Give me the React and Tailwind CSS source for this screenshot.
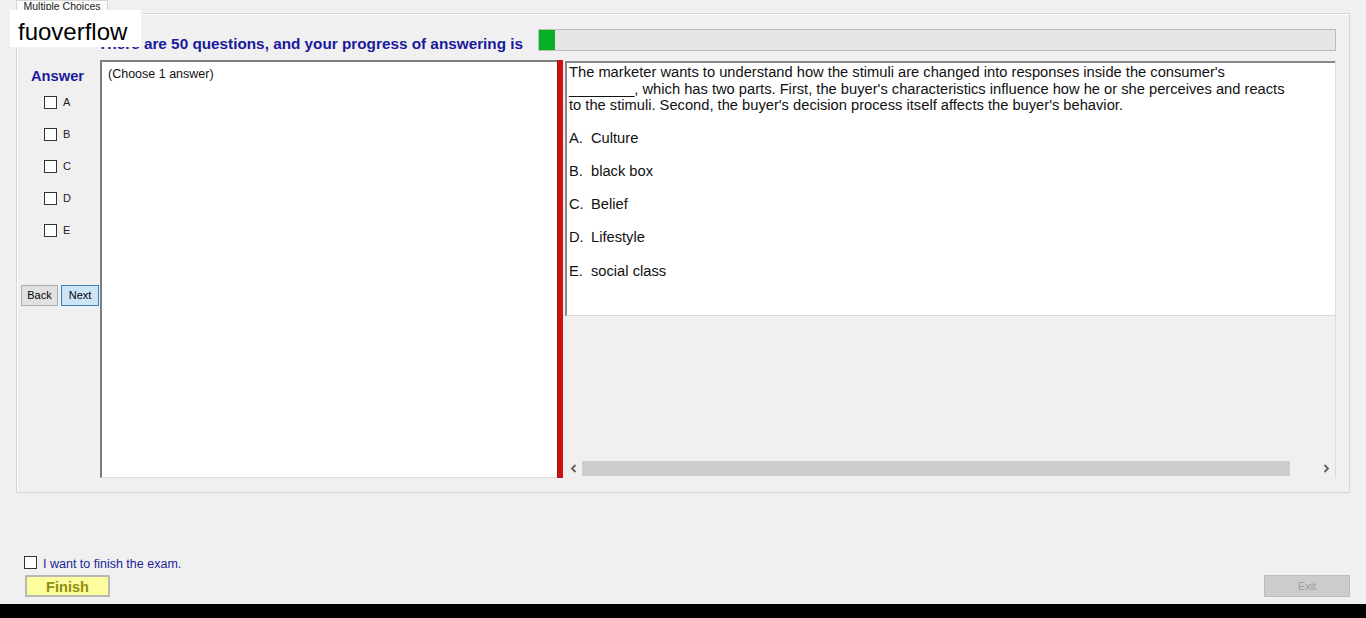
import { useState } from 'react'

const OPTIONS = [
  { key: 'A', text: 'Culture' },
  { key: 'B', text: 'black box' },
  { key: 'C', text: 'Belief' },
  { key: 'D', text: 'Lifestyle' },
  { key: 'E', text: 'social class' },
]

const Arrow = ({ dir }) => (
  <svg width="8" height="9" viewBox="0 0 8 9">
    <polyline
      points={dir === 'left' ? '5.5,1 2,4.5 5.5,8' : '2.5,1 6,4.5 2.5,8'}
      fill="none"
      stroke="#606060"
      strokeWidth="1.8"
    />
  </svg>
)

const Box = ({ checked, onClick }) => (
  <button
    onClick={onClick}
    className="w-[13px] h-[13px] border border-[#333] bg-white flex items-center justify-center shrink-0"
  >
    {checked && <span className="block w-[7px] h-[7px] bg-[#333]" />}
  </button>
)

export default function App() {
  const [picked, setPicked] = useState({})
  const [finish, setFinish] = useState(false)

  return (
    <div className="relative h-[618px] w-full overflow-hidden bg-[#f0f0f0] font-['Liberation_Sans',Arial,sans-serif] flex flex-col">
      {/* watermark box */}
      <div className="absolute left-[10px] top-[10px] w-[131px] h-[37px] bg-white pl-[8px] text-[24px] leading-[43px] text-black z-20">
        fuoverflow
      </div>

      {/* tab strip */}
      <div className="h-[13px] pl-[16px] flex">
        <div className="relative z-10 w-[92px] h-[14px] bg-[#fbfbfb] border border-b-0 border-[#d6d6d6] text-[10.5px] leading-[10px] text-[#222] text-center overflow-hidden">
          Multiple Choices
        </div>
      </div>

      {/* tab page */}
      <div className="ml-[16px] w-[1334px] h-[480px] border border-[#d6d6d6] shadow-[inset_1px_1px_0_#ffffff] flex flex-col">
        {/* header: count + progress */}
        <div className="mt-[15px] h-[22px] flex items-end">
          <div className="ml-[81px] w-[440px] text-[15.3px] leading-[17px] font-bold text-[#1a1a9c] whitespace-nowrap -mb-[1px]">
            There are 50 questions, and your progress of answering is
          </div>
          <div className="ml-auto mr-[13px] w-[799px] h-[22px] bg-[#e6e6e6] border border-[#bcbcbc] flex">
            <div className="w-[16px] h-full bg-[#06b025]" />
          </div>
        </div>

        {/* main row */}
        <div className="mt-[9px] h-[418px] flex">
          {/* answer column */}
          <div className="w-[83px] flex flex-col">
            <div className="pl-[14px] pt-[8px] text-[14.7px] leading-[17px] font-bold text-[#1a1a9c]">Answer</div>
            <div className="mt-[1px] flex flex-col">
              {OPTIONS.map((o) => (
                <div key={o.key} className="h-[32px] pl-[27px] flex items-center gap-[6px]">
                  <Box
                    checked={!!picked[o.key]}
                    onClick={() => setPicked((p) => ({ ...p, [o.key]: !p[o.key] }))}
                  />
                  <span className="text-[11px] text-[#222]">{o.key}</span>
                </div>
              ))}
            </div>
            <div className="mt-[39px] pl-[4px] flex gap-[3px]">
              <button className="w-[37px] h-[21px] bg-[#e1e1e1] border border-[#adadad] text-[11px] text-black">Back</button>
              <button className="w-[38px] h-[21px] bg-[#cce4f7] border border-[#3c7fb1] text-[11px] text-black">Next</button>
            </div>
          </div>

          {/* notes box */}
          <div className="w-[457px] bg-white border-t-2 border-l-2 border-[#7d7d7d] border-b border-b-[#dcdcdc] pl-[6px] pt-[5px] text-[12.5px] leading-[15px] text-[#111]">
            (Choose 1 answer)
          </div>

          {/* splitter */}
          <div className="w-[6px] bg-[#cf1111] border-l border-[#8e1616]" />

          {/* question pane */}
          <div className="w-[773px] pt-[1px] pb-[2px] flex flex-col border-r border-[#dcdcdc]">
            <div className="h-[255px] ml-[2px] bg-white border-t-2 border-l-2 border-[#8a8a8a] border-b border-b-[#d8d8d8] pl-[2px] pt-[1px] text-[14.7px] text-[#111]">
              <p className="leading-[16.5px] whitespace-nowrap">
                The marketer wants to understand how the stimuli are changed into responses inside the consumer's
                <br />
                ________, which has two parts. First, the buyer's characteristics influence how he or she perceives and reacts
                <br />
                to the stimuli. Second, the buyer's decision process itself affects the buyer's behavior.
              </p>
              <div className="mt-[7px]">
                {OPTIONS.map((o) => (
                  <div key={o.key} className="h-[33.3px] leading-[34px] flex">
                    <span className="w-[22px]">{o.key}.</span>
                    <span>{o.text}</span>
                  </div>
                ))}
              </div>
            </div>
            <div className="flex-1 ml-[2px] bg-[#f0f0f0]" />
            <div className="h-[16px] ml-[3px] mr-[1px] bg-[#f0f0f0] flex items-center">
              <div className="w-[16px] h-full flex items-center justify-center"><Arrow dir="left" /></div>
              <div className="w-[708px] h-[15px] bg-[#cdcdcd]" />
              <div className="flex-1" />
              <div className="w-[17px] h-full flex items-center justify-center"><Arrow dir="right" /></div>
            </div>
          </div>
        </div>
      </div>

      {/* footer */}
      <div className="h-[111px] flex flex-col">
        <div className="mt-[63px] h-[19px] pl-[24px] flex items-start gap-[6px]">
          <Box checked={finish} onClick={() => setFinish(!finish)} />
          <span className="mt-[1px] text-[12.5px] leading-[15px] text-[#23239a]">I want to finish the exam.</span>
        </div>
        <div className="pl-[25px] pr-[16px] flex justify-between">
          <button className="w-[85px] h-[22px] bg-[#fdfd9e] border-2 border-[#b8b8b8] text-[14.6px] leading-[20px] font-bold text-[#8f8f12]">
            Finish
          </button>
          <button disabled className="w-[86px] h-[22px] bg-[#cccccc] border border-[#bdbdbd] text-[11px] text-[#9d9d9d]">
            Exit
          </button>
        </div>
      </div>

      <div className="h-[14px] bg-black" />
    </div>
  )
}
